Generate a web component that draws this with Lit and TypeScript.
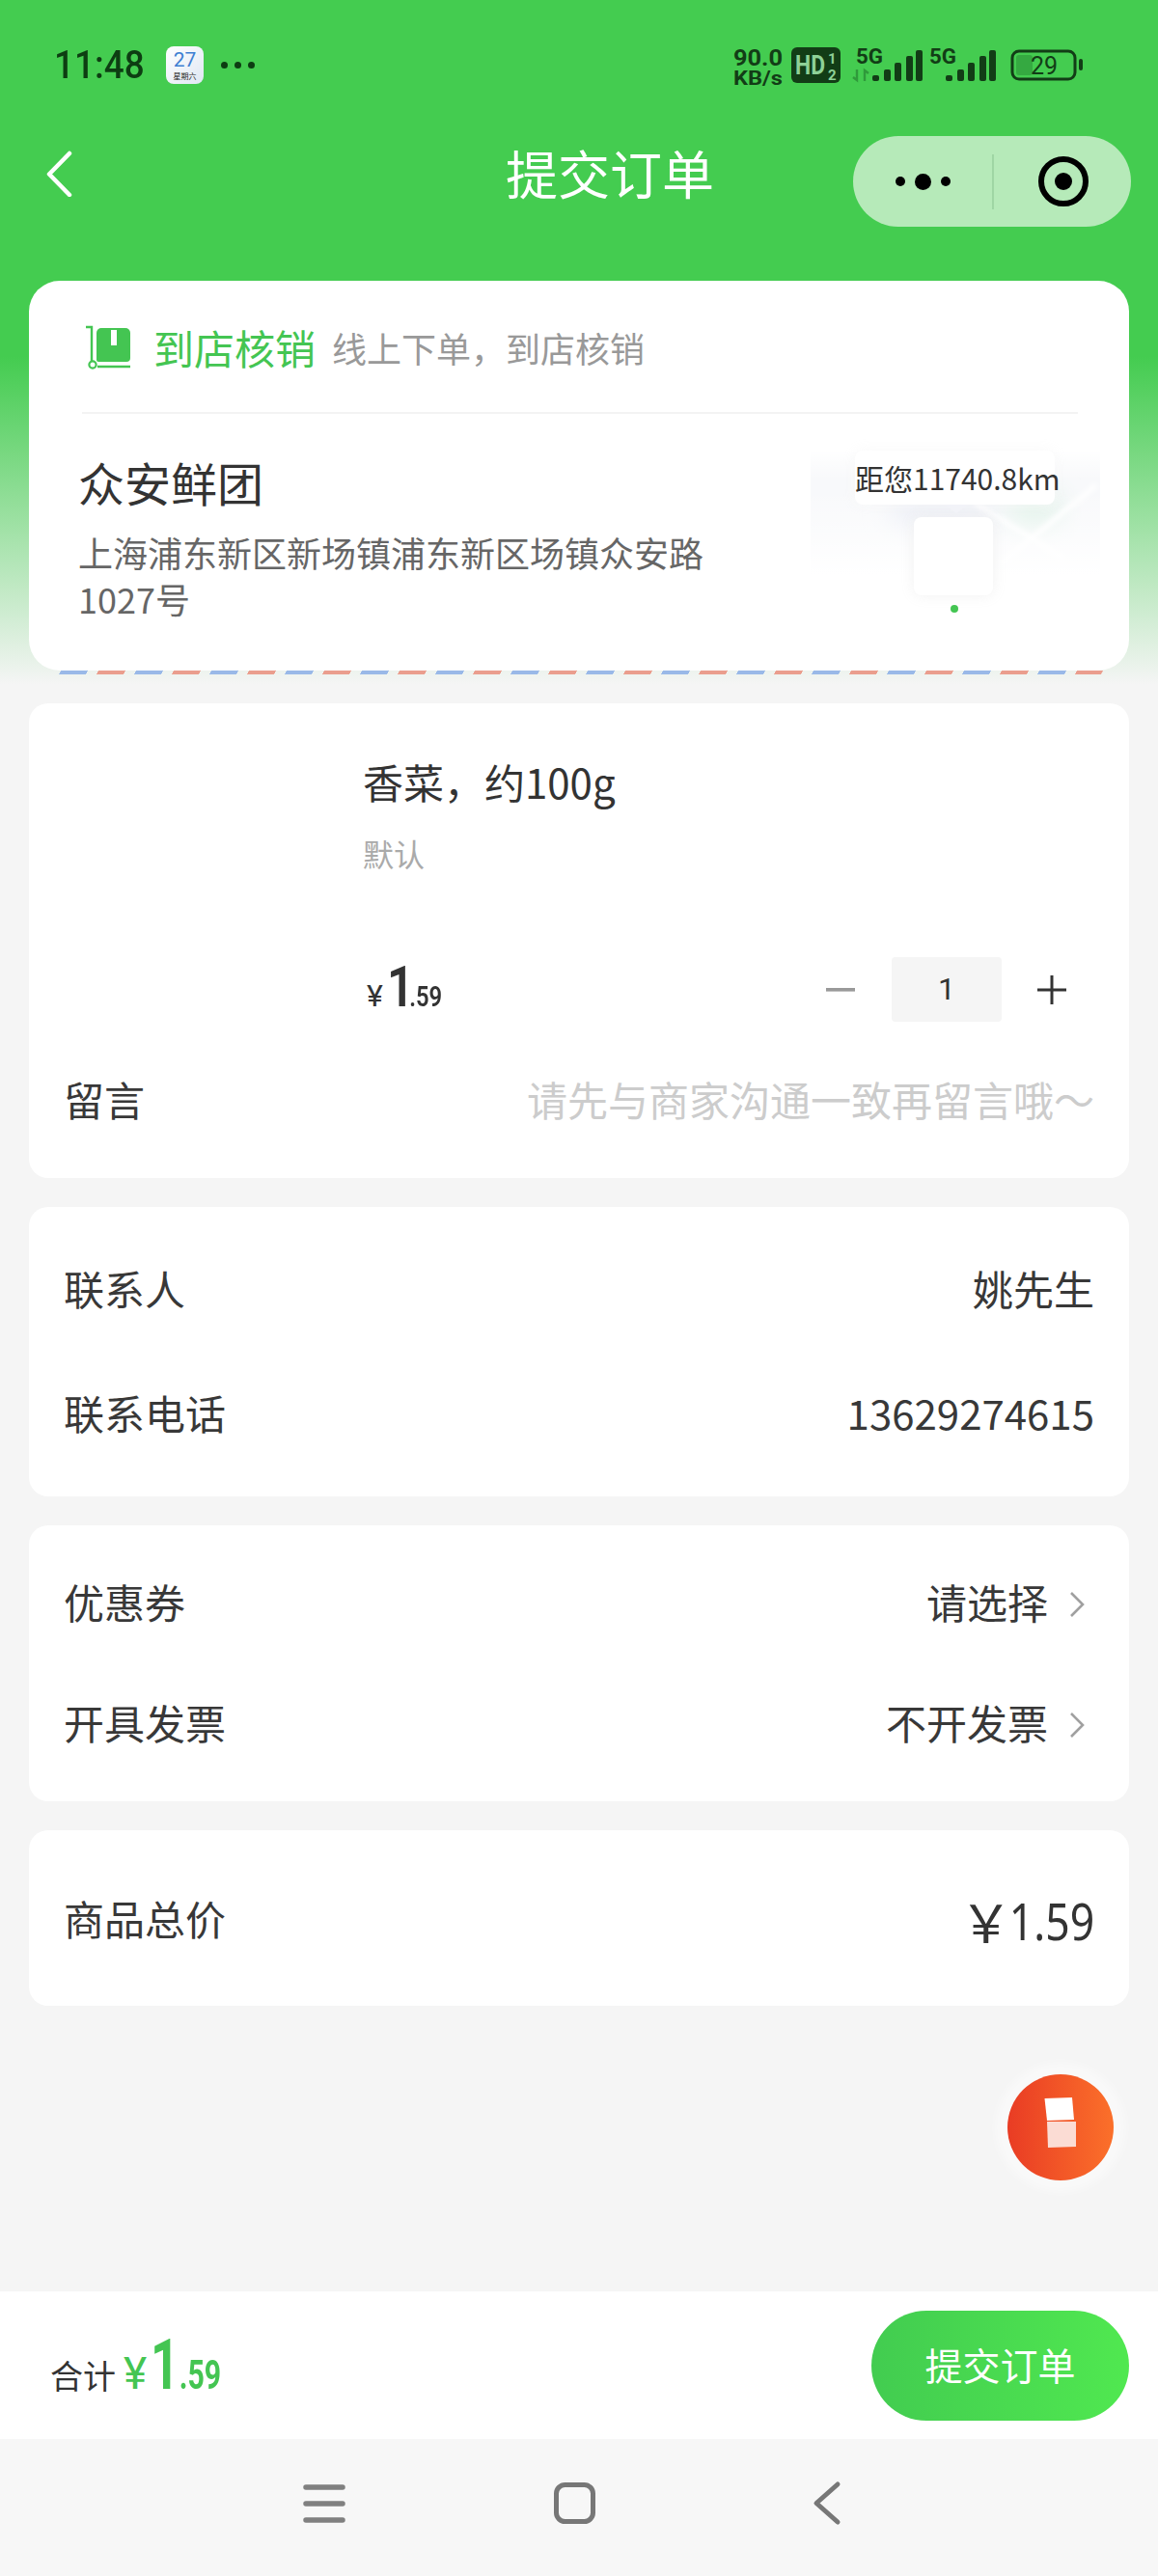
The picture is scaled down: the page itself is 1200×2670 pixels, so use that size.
import { LitElement, html, css, svg } from "lit";
import { customElement } from "lit/decorators.js";

const chevron = html`<svg class="chev" width="16" height="28" viewBox="0 0 16 28"><path d="M2 2l12 12L2 26" fill="none" stroke="#a0a0a0" stroke-width="2.6"/></svg>`;

function bars(x: number) {
  const xs = [0, 12, 23, 35, 45];
  const tops = [78, 72, 65, 58, 52];
  return xs.map((d, i) => svg`<rect x=${x + d} y=${tops[i]} width="7" height=${84 - tops[i]} rx="2" fill="#123d16"/>`);
}

@customElement("app-root")
export class AppRoot extends LitElement {
  static styles = css`
    :host { display: block; width: 1200px; height: 2670px; font-family: "Noto Sans CJK SC", "Noto Sans", sans-serif; color: #383838; }
    .page { position: relative; width: 1200px; height: 2670px; display: flex; flex-direction: column; overflow: hidden;
      background: linear-gradient(#44cc50 0, #44cc50 370px, #f5f5f5 710px); }
    .status { height: 134px; flex: none; padding-left: 56px; display: flex; align-items: center; position: relative; }
    .time { font: 500 41px/1 Roboto, sans-serif; color: #0d3d12; transform: scaleX(.9); transform-origin: left center; width: 116px; flex: none; }
    .cal { width: 39px; height: 39px; border-radius: 8px; background: linear-gradient(135deg, #fff, #dfe7f3); display: flex; flex-direction: column; align-items: center; flex: none; overflow: hidden; }
    .cal b { font: 400 21px/24px Roboto, sans-serif; color: #3e7fd2; margin-top: 2px; }
    .cal i { font: normal 8px/10px "Noto Sans CJK SC", sans-serif; color: #222; }
    .more { display: flex; gap: 7px; margin-left: 18px; }
    .more span { width: 7px; height: 7px; border-radius: 50%; background: #0d3d12; }
    .sys { position: absolute; left: 0; top: 0; }
    .nav { height: 108px; flex: none; display: flex; align-items: center; position: relative; }
    .back { margin: -16px 0 0 47px; flex: none; }
    .title { position: absolute; left: 0; right: 0; top: 0; height: 108px; padding-left: 64px; box-sizing: border-box; text-align: center; font-size: 54px; line-height: 90px; color: #fff; }
    .capsule { margin-left: auto; margin-right: 28px; width: 288px; height: 94px; border-radius: 47px; background: #b6eab9; display: flex; align-items: center; position: relative; }
    .dots { width: 144px; display: flex; align-items: center; justify-content: center; gap: 10px; }
    .dots span { width: 10px; height: 10px; border-radius: 50%; background: #000; }
    .dots span.m { width: 17px; height: 17px; }
    .sep { width: 2px; height: 57px; background: #9fd6a4; flex: none; }
    .target { margin-left: 46px; width: 52px; height: 52px; flex: none; box-sizing: border-box; border: 6px solid #000; border-radius: 50%; display: flex; align-items: center; justify-content: center; }
    .target span { width: 18px; height: 18px; background: #000; border-radius: 50%; }

    .main { margin-top: 49px; padding: 0 30px; display: flex; flex-direction: column; gap: 30px; }
    .card { background: #fff; border-radius: 20px; }
    .store { border-radius: 32px; height: 404px; }
    .stripes { height: 4px; margin: 0 28px 0 32px; transform: skewX(-30deg);
      background: repeating-linear-gradient(90deg, #9ab9e8 0, #9ab9e8 28px, transparent 28px, transparent 39px, #ea9e8e 39px, #ea9e8e 67px, transparent 67px, transparent 78px); }
    .head { height: 136px; box-sizing: border-box; padding: 2px 0 0 58px; display: flex; align-items: center; }
    .head svg { flex: none; }
    .way { margin-left: 23px; font-size: 42px; line-height: 60px; color: #44c552; }
    .way-sub { margin-left: 17px; font-size: 36px; line-height: 60px; color: #999; }
    .rule { height: 2px; margin: 0 53px 0 55px; background: #f3f3f3; }
    .store-body { display: flex; }
    .store-info { flex: none; padding: 40px 0 0 51px; box-sizing: border-box; width: 810px; }
    .store-name { font-size: 48px; line-height: 60px; color: #333; }
    .store-addr { margin-top: 19px; font-size: 36px; line-height: 48px; color: #666; width: 660px; }

    .map { position: relative; width: 300px; height: 190px; margin-top: 30px; flex: none; }
    .map-bg { position: absolute; left: 0; top: 8px; }
    .tip { position: absolute; left: 46px; top: 8px; width: 207px; height: 56px; background: #fff; border-radius: 8px; font-size: 30px; line-height: 56px; text-align: center; white-space: nowrap; color: #333; box-shadow: 0 0 14px rgba(248,248,248,.9); }
    .tip::after { content: ""; position: absolute; left: 93px; top: 56px; border: 12px solid transparent; border-bottom: 0; border-top: 9px solid #f2f3f8; }
    .pin { position: absolute; left: 107px; top: 77px; width: 82px; height: 81px; background: #fff; border-radius: 8px; box-shadow: 0 0 14px rgba(240,240,240,.9); }
    .dot { position: absolute; left: 145px; top: 168px; width: 8px; height: 8px; background: #44c552; border-radius: 50%; }

    .product { height: 492px; box-sizing: border-box; }
    .prod-row { padding: 51px 65px 0 346px; }
    .prod-title { font-size: 42px; line-height: 60px; color: #333; }
    .prod-spec { margin-top: 22px; font-size: 32px; line-height: 44px; color: #aaa; }
    .prod-bottom { margin-top: 86px; height: 67px; display: flex; align-items: center; }
    .price { display: inline-flex; align-items: baseline; color: #333; margin-left: 4px; margin-top: -6px; font-family: Roboto, sans-serif; }
    .price .y { font-size: 32px; margin-right: 4px; }
    .nums { display: inline-flex; align-items: baseline; transform-origin: left center; }
    .price .nums { transform: scaleX(.82); font-weight: 600; }
    .price .i { font-size: 60px; line-height: 67px; margin-right: -6px; }
    .price .d { font-size: 29px; }
    .stepper { margin-left: auto; display: flex; align-items: center; }
    .qty { width: 114px; height: 67px; background: #f5f5f5; border-radius: 4px; margin: 0 37px 0 38px; font: 400 32px/67px Roboto, sans-serif; text-align: center; color: #333; }
    .msg { margin-top: 53px; }
    .row { display: flex; justify-content: space-between; align-items: center; box-sizing: border-box; height: 60px; padding: 0 36px 6px 36px; font-size: 42px; line-height: 60px; color: #383838; }
    .ph { color: #ccc; }
    .right { display: flex; align-items: center; }
    .chev { margin-left: 22px; margin-right: 10px; flex: none; margin-top: 6px; }
    .c3 { padding: 57px 0 54px; height: 300px; box-sizing: border-box; display: flex; flex-direction: column; gap: 69px; }
    .c4 { padding: 52px 0 49px; height: 286px; box-sizing: border-box; display: flex; flex-direction: column; gap: 65px; }
    .c5 { padding: 64px 0 58px; height: 182px; box-sizing: border-box; }
    .total { display: flex; align-items: center; margin-top: 6px; color: #333; }
    .total .y { font-size: 54px; line-height: 60px; margin-right: -20px; }
    .total .n { font: 400 53px/60px "Noto Sans", Roboto, sans-serif; display: inline-block; transform: scaleX(.84); transform-origin: right center; }

    .float { position: absolute; left: 1044px; top: 2150px; width: 110px; height: 110px; border-radius: 50%; background: linear-gradient(90deg, #e93c24, #fb702a); box-shadow: 0 0 10px 12px rgba(255,255,255,.45); display: flex; align-items: center; justify-content: center; }
    .float svg { margin-top: -10px; }

    .spacer { flex: 1; }
    .bar { height: 153px; flex: none; background: #fff; display: flex; align-items: center; padding: 0 30px 0 52px; }
    .sum { display: flex; align-items: baseline; }
    .sum .lab { font-size: 34px; color: #333; margin-right: 8px; }
    .sum-price { display: inline-flex; align-items: baseline; font-family: Roboto, sans-serif; color: #44c552; }
    .sum-price .y { font-size: 46px; margin-right: 4px; }
    .sum-price .nums { transform: scaleX(.72); font-weight: 700; }
    .sum-price .i { font-size: 72px; line-height: 72px; }
    .sum-price .d { font-size: 42px; }
    .submit { margin-left: auto; width: 267px; height: 114px; border-radius: 57px; background: linear-gradient(90deg, #42cc50, #50e850); color: #fff; font-size: 39px; line-height: 110px; text-align: center; }
    .sysnav { height: 142px; flex: none; background: #f7f7f7; position: relative; }
    .sysnav svg { display: block; }
  `;

  render() {
    return html`<div class="page">
      <div class="status">
        <div class="time">11:48</div>
        <div class="cal"><b>27</b><i>星期六</i></div>
        <div class="more"><span></span><span></span><span></span></div>
        <svg class="sys" width="1200" height="134" viewBox="0 0 1200 134" font-family="Roboto, sans-serif">
          <text x="760" y="68" font-size="23" font-weight="700" fill="#123d16" textLength="51" lengthAdjust="spacingAndGlyphs">90.0</text>
          <text x="760" y="88" font-size="21" font-weight="700" fill="#123d16" textLength="51" lengthAdjust="spacingAndGlyphs">KB/s</text>
          <rect x="820" y="49" width="51" height="37" rx="6" fill="#123d16"/>
          <text x="824" y="77" font-size="27" font-weight="700" fill="#8ed197" textLength="31" lengthAdjust="spacingAndGlyphs">HD</text>
          <text x="858" y="66" font-size="15" font-weight="700" fill="#8ed197">1</text>
          <text x="858" y="83" font-size="15" font-weight="700" fill="#8ed197">2</text>
          <text x="887" y="66" font-size="22" font-weight="700" fill="#123d16" textLength="28" lengthAdjust="spacingAndGlyphs">5G</text>
          <path d="M888 72v11l-4-3M896 84V73l4 3" fill="none" stroke="#2f9a3b" stroke-width="2.4"/>
          ${bars(904)}
          <text x="963" y="66" font-size="22" font-weight="700" fill="#123d16" textLength="28" lengthAdjust="spacingAndGlyphs">5G</text>
          ${bars(980)}
          <rect x="1049" y="53" width="65" height="29" rx="7" fill="none" stroke="#123d16" stroke-width="3"/>
          <rect x="1053" y="57" width="17" height="21" rx="3" fill="#2f9a3b" opacity=".7"/>
          <text x="1082" y="77" font-size="25" fill="#123d16" text-anchor="middle">29</text>
          <rect x="1118" y="61" width="4" height="12" rx="2" fill="#123d16"/>
        </svg>
      </div>
      <div class="nav">
        <div class="title">提交订单</div>
        <svg class="back" width="28" height="48" viewBox="0 0 28 48"><path d="M25 3L4 24.500L25 46" fill="none" stroke="#fff" stroke-width="4.500" stroke-linecap="round" stroke-linejoin="round"/></svg>
        <div class="capsule">
          <div class="dots"><span></span><span class="m"></span><span></span></div>
          <div class="sep"></div>
          <div class="target"><span></span></div>
        </div>
      </div>

      <div class="main">
        <div>
          <div class="card store">
            <div class="head">
              <svg width="48" height="48" viewBox="0 0 48 48">
                <path d="M1 3h6v35" fill="none" stroke="#44c552" stroke-width="2.400"/>
                <circle cx="8" cy="42" r="3.600" fill="none" stroke="#44c552" stroke-width="2.200"/>
                <path d="M13 44h34" stroke="#44c552" stroke-width="2.400"/>
                <path d="M17 4h25a5 5 0 0 1 5 5v26a4 4 0 0 1-4 4H14a2 2 0 0 1-2-2V9a5 5 0 0 1 5-5z" fill="#44c552"/>
                <rect x="27" y="6" width="6" height="16" fill="#fff"/>
              </svg>
              <span class="way">到店核销</span>
              <span class="way-sub">线上下单，到店核销</span>
            </div>
            <div class="rule"></div>
            <div class="store-body">
              <div class="store-info">
                <div class="store-name">众安鲜团</div>
                <div class="store-addr">上海浦东新区新场镇浦东新区场镇众安路1027号</div>
              </div>
              <div class="map">
                <svg class="map-bg" width="300" height="150" viewBox="0 0 300 150">
                  <defs>
                    <filter id="b8" x="-30%" y="-30%" width="160%" height="160%"><feGaussianBlur stdDeviation="12"/></filter>
                    <filter id="b2" x="-30%" y="-30%" width="160%" height="160%"><feGaussianBlur stdDeviation="2.500"/></filter>
                    <linearGradient id="fadeb" x1="0" y1="0" x2="0" y2="1"><stop offset=".3" stop-color="#fff" stop-opacity="0"/><stop offset=".95" stop-color="#fff"/></linearGradient>
                    <linearGradient id="fadet" x1="0" y1="0" x2="0" y2="1"><stop offset="0" stop-color="#fff"/><stop offset=".22" stop-color="#fff" stop-opacity="0"/></linearGradient>
                  </defs>
                  <rect x="0" y="0" width="300" height="136" fill="#f8f9fb"/>
                  <ellipse cx="140" cy="64" rx="60" ry="22" fill="#e8ebf4" filter="url(#b8)"/>
                  <ellipse cx="232" cy="62" rx="30" ry="22" fill="#dff1e8" filter="url(#b8)"/>
                  <path d="M196 118L296 36M170 54L262 112" fill="none" stroke="#fff" stroke-width="5" filter="url(#b2)"/>
                  <rect x="0" y="0" width="300" height="136" fill="url(#fadeb)"/>
                  <rect x="0" y="0" width="300" height="136" fill="url(#fadet)"/>
                </svg>
                <div class="pin"></div>
                <div class="tip">距您11740.8km</div>
                <div class="dot"></div>
              </div>
            </div>
          </div>
          <div class="stripes"></div>
        </div>

        <div class="card product">
          <div class="prod-row">
            <div class="prod-title">香菜，约100g</div>
            <div class="prod-spec">默认</div>
            <div class="prod-bottom">
              <div class="price"><span class="y">¥</span><span class="nums"><span class="i">1</span><span class="d">.59</span></span></div>
              <div class="stepper">
                <svg width="30" height="4" viewBox="0 0 30 4"><rect width="30" height="3.600" fill="#999"/></svg>
                <div class="qty">1</div>
                <svg width="30" height="30" viewBox="0 0 30 30"><path d="M0 15h30M15 0v30" stroke="#333" stroke-width="3"/></svg>
              </div>
            </div>
          </div>
          <div class="row msg"><span>留言</span><span class="ph">请先与商家沟通一致再留言哦～</span></div>
        </div>

        <div class="card c3">
          <div class="row"><span>联系人</span><span>姚先生</span></div>
          <div class="row"><span>联系电话</span><span>13629274615</span></div>
        </div>

        <div class="card c4">
          <div class="row"><span>优惠券</span><span class="right">请选择${chevron}</span></div>
          <div class="row"><span>开具发票</span><span class="right">不开发票${chevron}</span></div>
        </div>

        <div class="card c5">
          <div class="row"><span>商品总价</span><span class="total"><span class="y">￥</span><span class="n">1.59</span></span></div>
        </div>
      </div>

      <div class="float">
        <svg width="36" height="54" viewBox="0 0 36 54">
          <path d="M1.500 2L30 1l2 23-28 1z" fill="#fff"/>
          <path d="M4 26h30v26l-29 1z" fill="#fbdcd4"/>
        </svg>
      </div>

      <div class="spacer"></div>
      <div class="bar">
        <div class="sum">
          <span class="lab">合计</span>
          <span class="sum-price"><span class="y">¥</span><span class="nums"><span class="i">1</span><span class="d">.59</span></span></span>
        </div>
        <div class="submit">提交订单</div>
      </div>
      <div class="sysnav">
        <svg width="1200" height="142" viewBox="0 0 1200 142">
          <path d="M317 50h38M317 67h38M317 84h38" stroke="#808080" stroke-width="5.500" stroke-linecap="round"/>
          <rect x="576.500" y="47.500" width="38" height="38" rx="9" fill="none" stroke="#777" stroke-width="5"/>
          <path d="M868 47L846 66.500L868 86" fill="none" stroke="#777" stroke-width="5" stroke-linecap="round" stroke-linejoin="round"/>
        </svg>
      </div>
    </div>`;
  }
}
